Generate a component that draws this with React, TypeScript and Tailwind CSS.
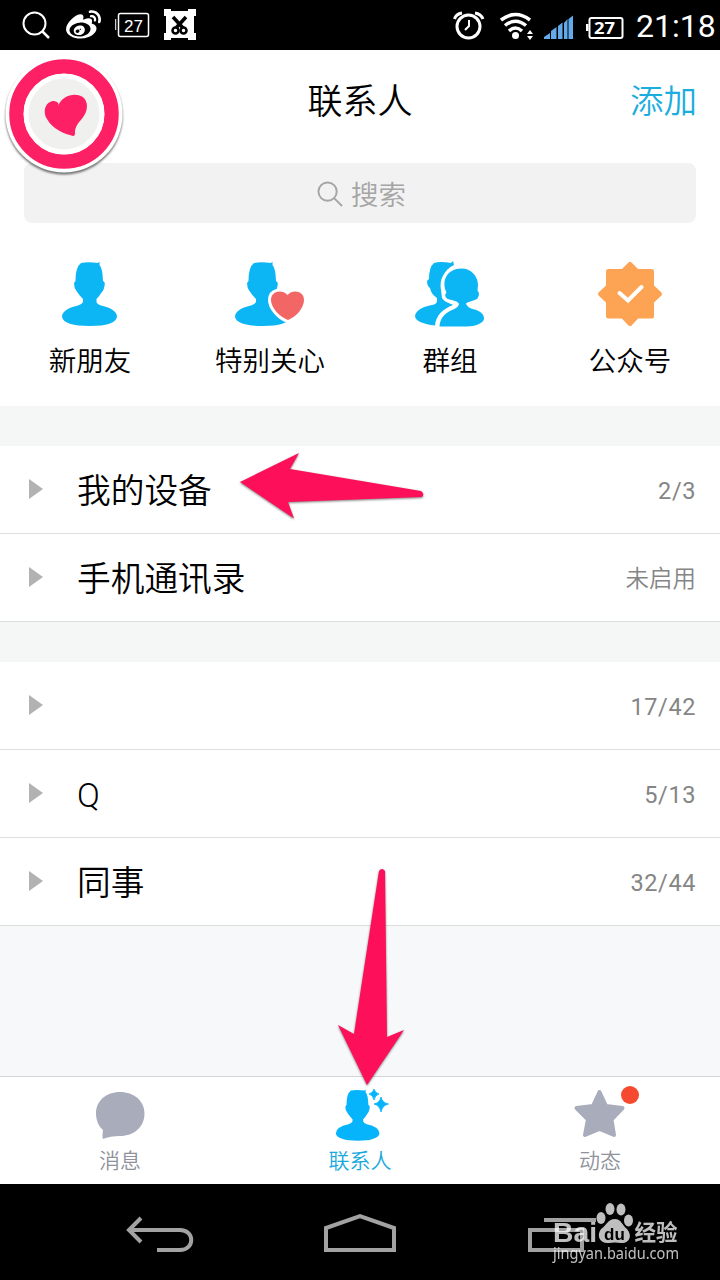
import type { ReactNode } from "react";
import { FaWeibo } from "react-icons/fa";

const PERSON =
  "M81 263 Q88 261.500 98 263 L99.500 261.500 V265 Q102.500 268 103 281 Q105.500 282 104.500 286 Q103.500 291 101.500 292.500 Q99.500 296 96.500 299 V302 Q97 304 101 305.500 Q117 309 117 317 Q115 326 90 326 Q64 326 62 317 Q62 309 78 305.500 Q82 304 83 302 V299 Q79 295 76.500 291 Q74 288 74 283 L75.500 281 Q75.500 267 81 263 Z";

const shortcuts = [
  { label: "新朋友", icon: <NewFriendIcon /> },
  { label: "特别关心", icon: <SpecialCareIcon /> },
  { label: "群组", icon: <GroupIcon /> },
  { label: "公众号", icon: <OfficialIcon /> },
];

const deviceGroups = [
  { name: "我的设备", count: "2/3" },
  { name: "手机通讯录", status: "未启用" },
];

const friendGroups = [
  { name: "", count: "17/42" },
  { name: "Q", count: "5/13" },
  { name: "同事", count: "32/44" },
];

function NewFriendIcon() {
  return (
    <svg width="80" height="70" viewBox="50 259 80 70">
      <path d={PERSON} fill="#0cb6f4" />
    </svg>
  );
}

function SpecialCareIcon() {
  const heart =
    "M288 320 C280 317 271 308 271 300 C271 291 282 289 287.500 295 C293 289 304 291 304 300 C304 308 296 317 288 320Z";
  return (
    <svg width="80" height="70" viewBox="230 259 80 70">
      <path d={PERSON} fill="#0cb6f4" transform="translate(173 0)" />
      <path d={heart} fill="#fff" stroke="#fff" strokeWidth="6" />
      <path d={heart} fill="#f26666" />
    </svg>
  );
}

function GroupIcon() {
  return (
    <svg width="80" height="70" viewBox="410 259 80 70">
      <path
        d="M434 263 Q440 261 451 263 L453 261 L454 265 C444 270 439 280 441 290 L442 298 C444 302 450 303 453 305 C443 309 436 315 435 325.500 C424 324.500 415 321 415 316 C416 309 426 306 432 305 Q437 304 437 301 V298 Q431 294 430 288 Q427 286 427 281 L429 279 Q429 267 434 263 Z"
        fill="#0cb6f4"
      />
      <path
        d="M461.500 268.500 C471 268.500 478 276 478 285 L477.500 291 C480 292 479 297 477 299 C473 301 467 302 466 303.500 C467 307 471 309 475 309.500 C482 312 484 315 484 318.500 C484 323 475 326.500 467 326.500 H439.500 C440 318 445 313 452 310 C456 308.500 459 306 459 304 C458 301 451 300 448 299 C445 298 444.500 294 446.500 292.500 C441 281 447 268.500 461.500 268.500Z"
        fill="#0cb6f4"
      />
    </svg>
  );
}

function OfficialIcon() {
  return (
    <svg width="80" height="70" viewBox="590 259 80 70">
      <path
        d="M630 264.500 L637 271.500 H651.500 V286.500 L659.500 294 L651.500 301.500 V316 H637 L630 323.500 L623 316 H608.500 V301.500 L600.500 294 L608.500 286.500 V271.500 H623 Z"
        fill="#fda354"
        stroke="#fda354"
        strokeWidth="5"
        strokeLinejoin="round"
      />
      <path d="M619.500 293 L628 300.500 L641.500 287" fill="none" stroke="#fff" strokeWidth="4" strokeLinecap="round" />
    </svg>
  );
}

function StatusBar() {
  return (
    <div className="flex h-[50px] items-center bg-black text-white">
      <svg className="ml-5" width="32" height="50" viewBox="20 0 32 50" fill="none" stroke="#fff">
        <circle cx="34.500" cy="23.500" r="11" strokeWidth="2" />
        <path d="M42 31 L49 38" strokeWidth="2.500" />
      </svg>
      <FaWeibo className="ml-3.5 size-[35px]" />
      <svg className="ml-3.5" width="35" height="50" viewBox="115 0 35 50">
        <path d="M115.500 19 V30" stroke="#ccc" strokeWidth="1.500" />
        <rect x="118.500" y="13.500" width="30" height="23" rx="2" fill="none" stroke="#fff" strokeWidth="1.500" />
        <text x="133.500" y="31.500" textAnchor="middle" fontSize="17" fill="#fff" className="font-['Liberation_Sans']">
          27
        </text>
      </svg>
      <svg className="ml-3.5" width="32" height="50" viewBox="164 0 32 50">
        <path d="M164 9 H171 V11 H188 V9 H196 V16 H194 V33 H196 V40 H188 V38 H171 V40 H164 V33 H166 V16 H164 Z" fill="#fff" />
        <g stroke="#000" fill="none">
          <path d="M173 17 L183 28 M186 17 L176 28" strokeWidth="3.500" />
          <circle cx="175.500" cy="30.500" r="3" strokeWidth="2.500" />
          <circle cx="183.500" cy="30.500" r="3" strokeWidth="2.500" />
        </g>
      </svg>
      <div className="ml-auto flex h-[50px] items-center">
        <svg width="32" height="50" viewBox="453 0 32 50" fill="none" stroke="#fff">
          <circle cx="468.500" cy="26.500" r="11.500" strokeWidth="3" />
          <path d="M469 20 V26 L465 30" strokeWidth="2" />
          <path d="M454.500 19 Q456 14 462 13 M475 13 Q481 14 483 19" strokeWidth="3" />
        </svg>
        <svg className="ml-[15px]" width="34" height="50" viewBox="500 0 34 50" fill="none" stroke="#fff">
          <path d="M501 20 Q515.500 9 530 20" strokeWidth="3.500" />
          <path d="M505 25.500 Q515.500 17 526 25.500" strokeWidth="3.500" />
          <path d="M509 31 Q515.500 25 522 31" strokeWidth="3.500" />
          <circle cx="515.500" cy="35.500" r="3.500" fill="#fff" stroke="none" />
          <path d="M527 34 L530 30 L533 34 Z M527 36 L530 40 L533 36Z" fill="#fff" stroke="none" />
        </svg>
        <svg className="ml-2.5" width="29" height="50" viewBox="544 0 29 50" fill="#63aaea">
          <path d="M544 39 V37 L550 33 V39Z M551 39 V31 L556.500 27 V39Z M558 39 V26 L562.500 22.500 V39Z M564 39 V23 L567.500 19 V39Z M568.500 39 V19 L573 15.500 V39Z" />
        </svg>
        <svg className="ml-[13px]" width="38" height="50" viewBox="586 0 38 50">
          <rect x="589.500" y="18" width="33" height="20" rx="2" fill="none" stroke="#fff" strokeWidth="2" />
          <path d="M587 24 V31" stroke="#fff" strokeWidth="3" />
          <text
            x="604.500"
            y="34"
            textAnchor="middle"
            fontSize="16"
            fontWeight="700"
            fill="#fff"
            textLength="21"
            lengthAdjust="spacingAndGlyphs"
            className="font-['Open_Sans']"
          >
            27
          </text>
        </svg>
        <span className="ml-3 mr-1 w-20 whitespace-nowrap pt-0.5 font-['Roboto',sans-serif] text-[32px] font-normal leading-[50px]">
          21:18
        </span>
      </div>
    </div>
  );
}

function Header() {
  return (
    <header className="relative grid h-[113px] grid-cols-3 pr-[23px] pl-6">
      {/* floating assistant button */}
      <svg className="absolute top-1 left-0 drop-shadow-[0_2px_1px_rgba(0,0,0,0.55)]" width="130" height="130" viewBox="0 54 130 130">
        <circle cx="64" cy="114" r="58.500" fill="#fff" />
        <circle cx="64" cy="114" r="47.500" fill="#f0f0ef" stroke="#fd2065" strokeWidth="14.500" />
        <circle cx="64" cy="114" r="38" fill="none" stroke="#fff" strokeWidth="5" />
        <path
          d="M73 136 C65 134 52 129 47 119 C42 111 46 101 54 101 Q60 102 58 106 C63 94 77 92 84 98 C90 105 86 115 80 121 C75 127 75 130 75 134 Q75 136 73 136Z"
          fill="#fd2065"
        />
      </svg>
      <h1 className="col-start-2 -ml-px text-center text-[35px] leading-[106px]">联系人</h1>
      <button className="self-start text-right text-[33.5px] leading-[104px] text-[#1badde]">添加</button>
    </header>
  );
}

function SearchBox() {
  return (
    <div className="mx-6 flex h-[60px] items-center justify-center gap-2 rounded-lg bg-[#f2f2f2] pl-[3px] text-[27.5px] text-[#a5a5a5]">
      <svg className="mt-0.5" width="26" height="26" viewBox="0 0 27 27" fill="none" stroke="#a5a5a5" strokeWidth="2">
        <circle cx="11" cy="11" r="9.500" />
        <path d="M18 18 L26 26" />
      </svg>
      <span className="pt-1.5">搜索</span>
    </div>
  );
}

interface GroupRowProps {
  name: string;
  count?: string;
  status?: string;
}

function GroupRow({ name, count, status }: GroupRowProps) {
  return (
    <div className="flex h-[88px] items-center border-b border-[#dcdddd] bg-white pr-6 pl-[29px]">
      <svg className="mb-0.5" width="14" height="20" viewBox="0 0 14 20" fill="#b2b2b2">
        <path d="M0 0 L14 10 L0 20Z" />
      </svg>
      <span className="ml-[34px] pt-1.5 text-[33.7px]">{name}</span>
      {count && (
        <span className="ml-auto pt-1 text-[23.5px] font-normal tracking-[0.6px] text-[#858585]">{count}</span>
      )}
      {status && <span className="ml-auto pt-1 text-[23.5px] text-[#858585]">{status}</span>}
    </div>
  );
}

function Tab({ label, icon, active }: { label: string; icon: ReactNode; active?: boolean }) {
  return (
    <div className={`flex flex-col items-center pt-1.5 text-[21px] ${active ? "text-[#19a9dc]" : "text-[#8f919c]"}`}>
      {icon}
      <span className="leading-[40px]">{label}</span>
    </div>
  );
}

function TabBar() {
  return (
    <nav className="grid h-[108px] grid-cols-3 border-t border-[#d2d4d5] bg-white">
      <Tab
        label="消息"
        icon={
          <svg width="80" height="58" viewBox="80 1083 80 58">
            <path
              d="M120 1092 C134 1092 144.500 1101 144.500 1113.500 C144.500 1127 134 1136 120 1136 Q110 1136 103 1139 Q102 1138 103 1130 C98 1126 96 1119 96 1113.500 C96 1101 106 1092 120 1092Z"
              fill="#a8acbb"
            />
          </svg>
        }
      />
      <Tab
        label="联系人"
        active
        icon={
          <svg width="80" height="58" viewBox="320 1083 80 58">
            <path d={PERSON} fill="#05b4fb" transform="translate(286.500 881.500) scale(0.795)" />
            <path
              d="M374 1089 Q375 1093 379 1094 Q375 1095 374 1100 Q373 1095 369 1094 Q373 1093 374 1089Z M381 1097 Q382.500 1103 388.500 1104 Q382.500 1105 381 1112 Q379.500 1105 374 1104 Q379.500 1103 381 1097Z"
              fill="#05b4fb"
              stroke="#05b4fb"
              strokeWidth="0.800"
            />
          </svg>
        }
      />
      <Tab
        label="动态"
        icon={
          <svg width="80" height="58" viewBox="560 1083 80 58">
            <path
              d="M599.500 1092 L606 1106 L622.500 1108 L611.500 1119.500 L614 1135 L599.500 1129 L585 1135 L588 1119.500 L576.500 1108 L593 1106Z"
              fill="#a8acbb"
              stroke="#a8acbb"
              strokeWidth="4"
              strokeLinejoin="round"
            />
            <circle cx="630" cy="1095" r="9" fill="#f64a30" />
          </svg>
        }
      />
    </nav>
  );
}

function SystemNav() {
  return (
    <div className="relative grid h-24 grid-cols-3 items-center bg-black">
      <svg className="ml-[120px]" width="80" height="96" viewBox="120 1184 80 96" fill="none" stroke="#a2a2a2" strokeWidth="4">
        <path d="M130 1230 H180 C195 1230 195 1250 180 1250 H157" />
        <path d="M141 1218 L129 1230 L141 1242" />
      </svg>
      <svg className="justify-self-center" width="80" height="96" viewBox="320 1184 80 96" fill="none" stroke="#a2a2a2" strokeWidth="4">
        <path d="M326 1250 V1228 L360 1216 L394 1228 V1250 Z" />
      </svg>
      <svg className="ml-10" width="80" height="96" viewBox="520 1184 80 96" fill="none" stroke="#a2a2a2" strokeWidth="4">
        <path d="M530 1230 H582 V1250 H530 Z M544 1220 H596" />
      </svg>
      <Watermark />
    </div>
  );
}

function Watermark() {
  return (
    <svg className="absolute top-3 left-[548px] opacity-75" width="160" height="80" viewBox="548 1196 160 80" fill="#fff">
      <text x="553" y="1242" fontSize="28" fontWeight="700" textLength="44" lengthAdjust="spacingAndGlyphs" className="font-['Liberation_Sans']">
        Bai
      </text>
      <ellipse cx="601" cy="1218" rx="4.500" ry="6" />
      <ellipse cx="610" cy="1209" rx="4.500" ry="6" />
      <ellipse cx="621" cy="1209.500" rx="4.500" ry="6" />
      <ellipse cx="628.500" cy="1220.500" rx="4.500" ry="6" />
      <path d="M615 1219 C621 1219 622 1225 627 1229 C633 1236 629 1244 621 1243 Q615 1242 609 1243 C600 1244 596 1236 601 1229 C607 1225 608 1219 615 1219Z" />
      <text x="614.500" y="1239.500" textAnchor="middle" fontSize="17" fontWeight="700" fill="#000" className="font-['Liberation_Sans']">
        du
      </text>
      <text x="634.500" y="1239.500" fontSize="21.500" fontWeight="700" className="font-['Noto_Sans_CJK_SC',sans-serif]">
        经验
      </text>
      <text x="553" y="1259" fontSize="16" fontWeight="400" textLength="126" lengthAdjust="spacingAndGlyphs" className="font-['Noto_Sans']">
        jingyan.baidu.com
      </text>
    </svg>
  );
}

// Arrows drawn over the whole screen
function Annotations() {
  return (
    <svg
      className="pointer-events-none absolute inset-0 drop-shadow-[0_1px_1px_rgba(0,0,0,0.5)]"
      width="720"
      height="1280"
      viewBox="0 0 720 1280"
      fill="#fd1059"
    >
      <path d="M240 482 L299 453 L290 469 L421 491 Q425 494 422 497 L288 502 L294 518.500 Z" />
      <path d="M367 1085 L338 1025 L354 1034 L379 871 Q382 867 385 871 L387 1037 L404 1030 Z" />
    </svg>
  );
}

export default function App() {
  return (
    <div className="relative flex h-[1280px] w-[720px] flex-col overflow-hidden bg-white font-['Roboto','Noto_Sans_CJK_SC',sans-serif] font-[350] text-black">
      <StatusBar />
      <Header />
      <SearchBox />
      <div className="grid h-[183px] grid-cols-4 pt-9">
        {shortcuts.map((item) => (
          <div key={item.label} className="flex flex-col items-center">
            {item.icon}
            <span className="text-[27.5px] leading-[65px]">{item.label}</span>
          </div>
        ))}
      </div>
      <div className="h-10 bg-[#f5f7f7]" />
      {deviceGroups.map((group) => (
        <GroupRow key={group.name} {...group} />
      ))}
      <div className="h-10 bg-[#f5f7f7]" />
      {friendGroups.map((group) => (
        <GroupRow key={group.name} {...group} />
      ))}
      <div className="flex-1 bg-[#f7f8fa]" />
      <TabBar />
      <SystemNav />
      <Annotations />
    </div>
  );
}
